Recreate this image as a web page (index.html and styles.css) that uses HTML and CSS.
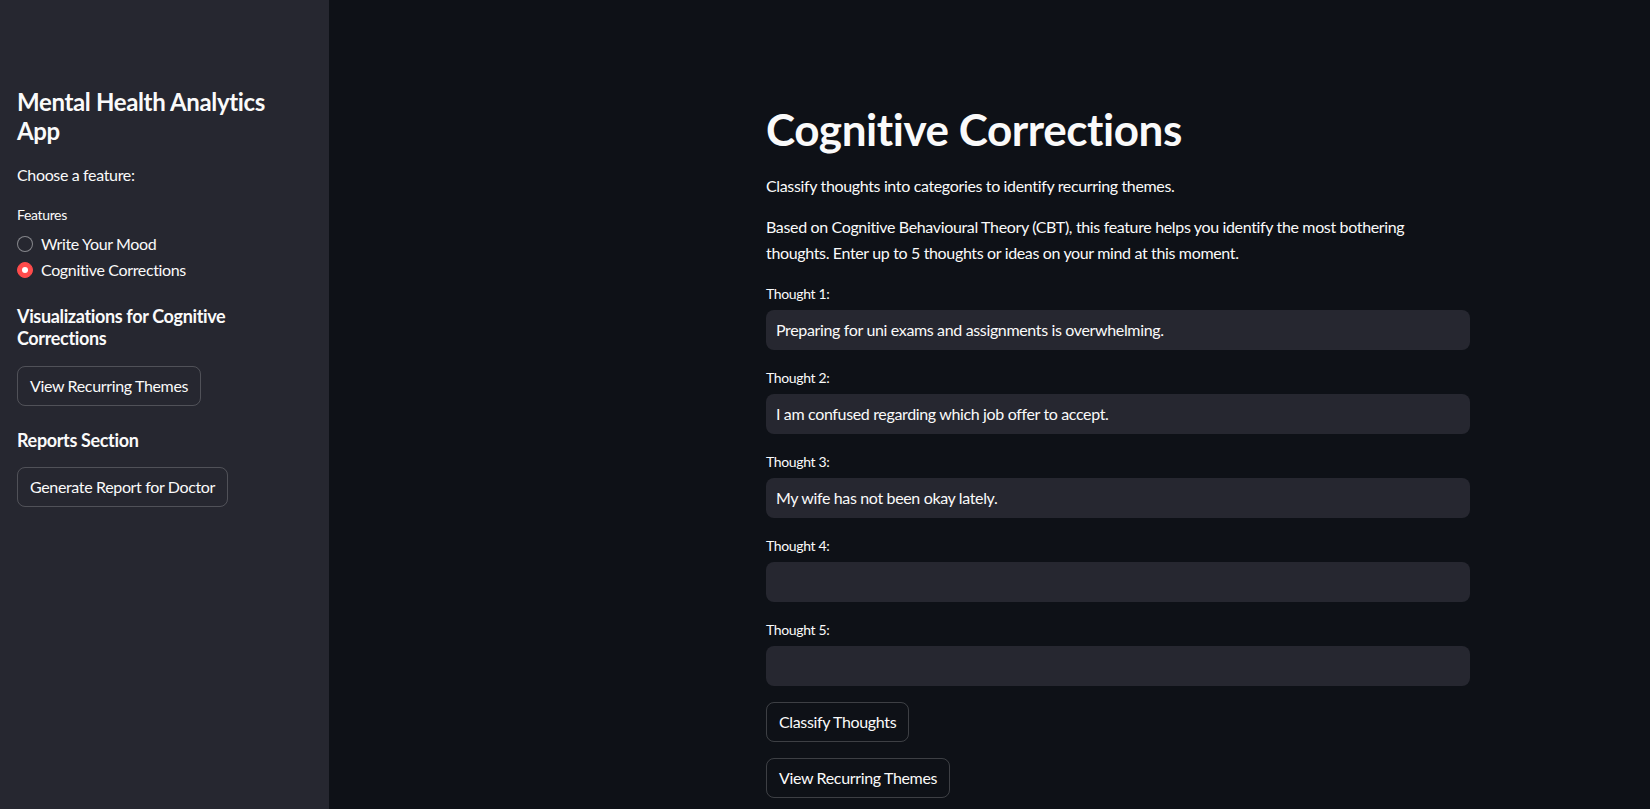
FILE: index.html
```html
<!DOCTYPE html>
<html lang="en">
<head>
<meta charset="utf-8">
<title>Mental Health Analytics App</title>
<link rel="stylesheet" href="styles.css">
</head>
<body>
<div class="app">
  <aside class="sidebar">
    <div class="side-content">
      <h1 class="side-title">Mental Health Analytics App</h1>
      <p class="text">Choose a feature:</p>
      <div class="radio-group">
        <div class="widget-label">Features</div>
        <label class="radio"><span class="circle"></span><span>Write Your Mood</span></label>
        <label class="radio checked"><span class="circle"></span><span>Cognitive Corrections</span></label>
      </div>
      <h3 class="side-h3">Visualizations for Cognitive Corrections</h3>
      <div><button class="btn">View Recurring Themes</button></div>
      <h3 class="side-h3">Reports Section</h3>
      <div><button class="btn">Generate Report for Doctor</button></div>
    </div>
  </aside>
  <main class="main">
    <div class="block">
      <h1 class="title">Cognitive Corrections</h1>
      <p class="text">Classify thoughts into categories to identify recurring themes.</p>
      <p class="text">Based on Cognitive Behavioural Theory (CBT), this feature helps you identify the most bothering thoughts. Enter up to 5 thoughts or ideas on your mind at this moment.</p>
      <div class="field">
        <div class="widget-label">Thought 1:</div>
        <div class="input">Preparing for uni exams and assignments is overwhelming.</div>
      </div>
      <div class="field">
        <div class="widget-label">Thought 2:</div>
        <div class="input">I am confused regarding which job offer to accept.</div>
      </div>
      <div class="field">
        <div class="widget-label">Thought 3:</div>
        <div class="input">My wife has not been okay lately.</div>
      </div>
      <div class="field">
        <div class="widget-label">Thought 4:</div>
        <div class="input"></div>
      </div>
      <div class="field">
        <div class="widget-label">Thought 5:</div>
        <div class="input"></div>
      </div>
      <div><button class="btn">Classify Thoughts</button></div>
      <div><button class="btn">View Recurring Themes</button></div>
    </div>
  </main>
</div>
</body>
</html>
```

FILE: styles.css
```css
* { box-sizing: border-box; }

html, body {
  margin: 0;
  padding: 0;
  height: 100%;
  overflow: hidden;
}

body {
  background: #0e1117;
  color: #fafafa;
  font-family: Lato, "Liberation Sans", sans-serif;
  font-size: 16px;
  letter-spacing: -0.022em;
}

.app {
  display: flex;
  height: 809px;
}

.sidebar {
  width: 329px;
  flex: 0 0 329px;
  background: #262730;
  height: 100%;
}

.side-content {
  padding: 88px 24px 0 17px;
  display: flex;
  flex-direction: column;
  gap: 16px;
}

.side-title {
  margin: 0;
  font-size: 24px;
  font-weight: 700;
  line-height: 1.2;
  max-width: 262px;
}

.text {
  margin: 0;
  line-height: 1.6;
  font-size: 16px;
}

.widget-label {
  font-size: 14px;
  min-height: 24px;
  line-height: 24px;
  margin-bottom: 4px;
}

.radio-group {
  display: flex;
  flex-direction: column;
}

.radio {
  display: flex;
  align-items: center;
  gap: 8px;
  height: 25.6px;
  font-size: 16px;
}

.circle {
  width: 16px;
  height: 16px;
  border-radius: 50%;
  border: 1px solid rgba(250, 250, 250, 0.45);
  background: #262730;
  flex: 0 0 16px;
  display: flex;
  align-items: center;
  justify-content: center;
}

.radio.checked .circle {
  background: #ff4b4b;
  border-color: #ff4b4b;
}

.radio.checked .circle::after {
  content: "";
  width: 6px;
  height: 6px;
  border-radius: 50%;
  background: #ffffff;
}

.side-h3 {
  margin: 0;
  padding: 8px 0 0;
  font-size: 18px;
  font-weight: 700;
  line-height: 1.2;
}

.btn {
  font-family: inherit;
  font-size: 16px;
  letter-spacing: inherit;
  color: #fafafa;
  background: transparent;
  border: 1px solid rgba(250, 250, 250, 0.2);
  border-radius: 8px;
  height: 40px;
  padding: 0 12px;
  line-height: 1.6;
  cursor: pointer;
}

.main {
  flex: 1;
  height: 100%;
  padding: 103px 0 0 437px;
}

.block {
  width: 704px;
  display: flex;
  flex-direction: column;
  gap: 16px;
}

.title {
  margin: 0 0 1px;
  font-size: 44px;
  font-weight: 700;
  line-height: 1.2;
  letter-spacing: -0.01em;
}

.field {
  display: flex;
  flex-direction: column;
}

.input {
  height: 40px;
  background: #262730;
  border-radius: 8px;
  padding: 0 10px;
  display: flex;
  align-items: center;
  font-size: 16px;
}
```
